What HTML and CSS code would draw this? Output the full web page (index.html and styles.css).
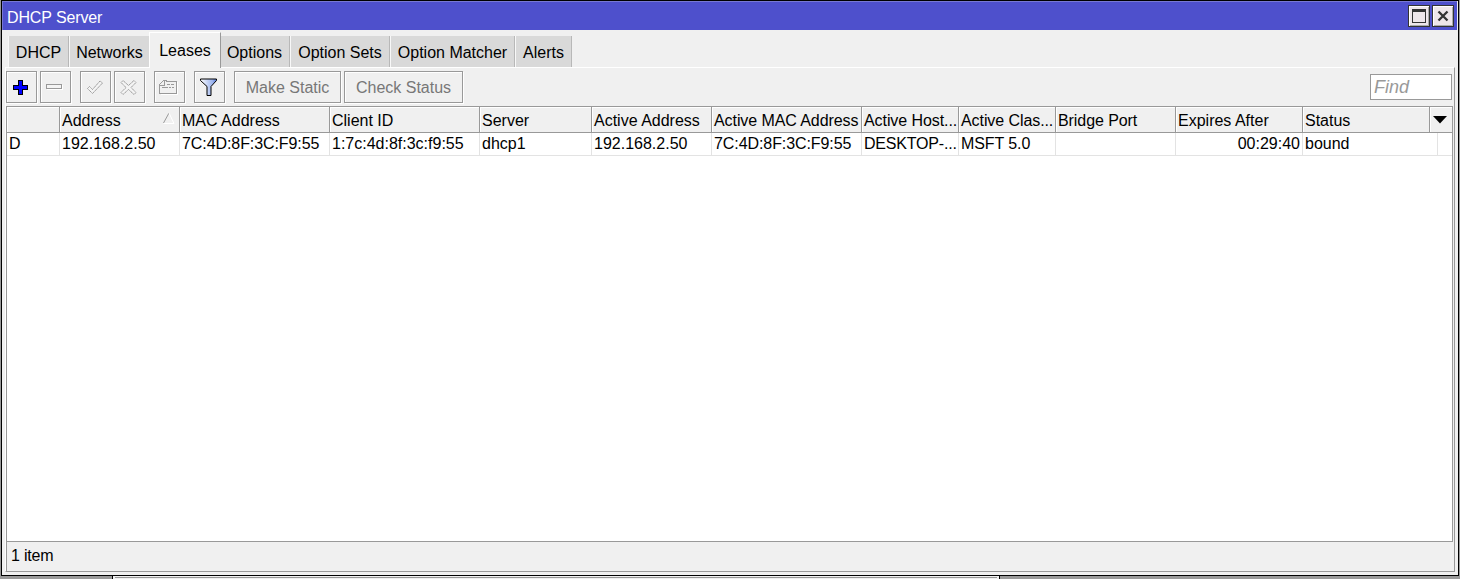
FILE: index.html
```
<!DOCTYPE html>
<html lang="en">
<head>
<meta charset="utf-8">
<title>DHCP Server</title>
<link rel="stylesheet" href="styles.css">
</head>
<body>
<main class="window">
  <header class="titlebar">
    <h1 class="title">DHCP Server</h1>
    <button class="winbtn" aria-label="Maximize"><svg width="14" height="14" shape-rendering="crispEdges"><path d="M0 0h14v14H0zM1 3v10h12V3z" fill="#333" fill-rule="evenodd"/></svg></button>
    <button class="winbtn" aria-label="Close"><svg width="12" height="12"><path d="M1.500 1.500l9 9M10.500 1.500l-9 9" stroke="#333" stroke-width="2.300"/></svg></button>
  </header>
  <nav class="tabs">
    <a class="tab t1">DHCP</a><a class="tab t2">Networks</a><a class="tab active">Leases</a><a class="tab t4">Options</a><a class="tab t5">Option Sets</a><a class="tab t6">Option Matcher</a><a class="tab t7">Alerts</a>
  </nav>
  <section class="panel">
    <div class="toolbar">
      <button class="tool" aria-label="Add"><svg width="15" height="15" shape-rendering="crispEdges"><path d="M5 0h5v5h5v5h-5v5H5v-5H0V5h5z"/><path d="M6 1h3v5h5v3H9v5H6V9H1V6h5z" fill="#00f"/></svg></button>
      <button class="tool gap" aria-label="Remove"><svg width="17" height="6" shape-rendering="crispEdges"><path d="M1.500 1.500h15v4h-15z" fill="none" stroke="#fff"/><path d="M.5.5h15v4H.5z" fill="#f4f4f4" stroke="#999"/></svg></button>
      <button class="tool" aria-label="Enable"><svg width="18" height="15"><path d="M1.500 8.500l2-2 3 3L14 1l2.500 2L6.500 13.500z" fill="#f4f4f4" stroke="#999" stroke-dasharray="1.700 .4"/></svg></button>
      <button class="tool gap" aria-label="Disable"><svg width="17" height="17"><path d="M1 3.500l2-2 5.500 5L14 1.500l2 2-5 5 5 5-2 2-5.500-5-5.500 5-2-2 5-5z" fill="#f4f4f4" stroke="#999" stroke-dasharray="1.700 .4"/></svg></button>
      <button class="tool gap" aria-label="Comment"><svg width="19" height="15" shape-rendering="crispEdges"><path d="M2 14.500h16.500V2" fill="none" stroke="#fff"/><path d="M.5 13.500v-9l4-4h3v1h10v12z" fill="#f0f0f0" stroke="#999"/><path d="M1 5.500h5M5.500 1v5M8 4.500h3M12 4.500h3M3 7.500h6M10 7.500h2M13 7.500h2" fill="none" stroke="#999"/></svg></button>
      <button class="tool gap" aria-label="Filter"><svg width="18" height="19"><defs><linearGradient id="funnel"><stop offset="0" stop-color="#fff"/><stop offset=".75" stop-color="#9cb4ee"/><stop offset="1" stop-color="#5475cf"/></linearGradient></defs><path d="M.5 1h16v1.500l-5.500 6v9H7v-9l-6.500-6z" fill="url(#funnel)" stroke="#000"/></svg></button>
      <button class="command make">Make Static</button>
      <button class="command check">Check Status</button>
      <div class="find">Find</div>
    </div>
    <div class="table">
      <div class="row head">
        <span></span><span class="sorted">Address<svg width="12" height="12"><path d="M.5 11L6 1" stroke="#999"/><path d="M6 1l5 10.500H.5" fill="none" stroke="#fff"/></svg></span><span>MAC Address</span><span>Client ID</span><span>Server</span><span>Active Address</span><span class="tight">Active MAC Address</span><span class="tight">Active Host...</span><span class="tight">Active Clas...</span><span class="tight">Bridge Port</span><span>Expires After</span><span>Status</span><span class="more"><svg width="14" height="8"><path d="M0 0h14L7 7.500z"/></svg></span>
      </div>
      <div class="row data">
        <span>D</span><span>192.168.2.50</span><span class="tight">7C:4D:8F:3C:F9:55</span><span>1:7c:4d:8f:3c:f9:55</span><span>dhcp1</span><span>192.168.2.50</span><span class="tight">7C:4D:8F:3C:F9:55</span><span class="host">DESKTOP-...</span><span class="tight">MSFT 5.0</span><span></span><span class="right">00:29:40</span><span>bound</span><span></span>
      </div>
    </div>
    <footer class="status">1 item</footer>
  </section>
</main>
<div class="behind"></div>
</body>
</html>
```
FILE: styles.css
```
* { box-sizing: border-box; }
body {
  margin: 0;
  height: 579px;
  overflow: hidden;
  background: #999;
  font: 16px/20px "Liberation Sans", Arial, sans-serif;
  color: #000;
}
button { font: inherit; padding: 0; margin: 0; }
svg { display: block; }
.window {
  width: 1458px;
  height: 576px;
  margin-left: 1px;
  border: 1px solid #000;
  background: #f0f0f0;
  display: flex;
  flex-direction: column;
}
.titlebar {
  height: 29px;
  flex: none;
  background: #4e50cc;
  border-top: 1px solid #7778d4;
  border-left: 1px solid #7778d4;
  margin-right: 1px;
  display: flex;
  align-items: center;
  gap: 2px;
  padding: 0 3px 0 4px;
}
.title { flex: 1; margin: 3px 0 0; font-size: 16px; font-weight: 400; letter-spacing: -.12px; color: #fff; }
.winbtn {
  width: 22px;
  height: 22px;
  border: 1px solid #333;
  background: #eee6ea;
  box-shadow: inset 1px 1px #fff, inset -1px -1px #aaa;
  display: grid;
  place-items: center;
}
.tabs { height: 37px; flex: none; display: flex; align-items: flex-end; padding-left: 6px; }
.tab {
  height: 31px;
  background: #d9d9d9;
  border-left: 1px solid #f8f8f8;
  border-right: 1px solid #b8b8b8;
  text-align: center;
  line-height: 33px;
  white-space: nowrap;
}
.t1 { width: 61px; }
.t2 { width: 80px; border-right: 0; }
.active {
  width: 72px;
  height: 36px;
  margin-bottom: -1px;
  background: #f0f0f0;
  border-top: 1px solid #fff;
  border-left-color: #fff;
  border-right-color: #999;
  line-height: 35px;
  position: relative;
}
.t4 { width: 69px; border-left: 0; padding-right: 1px; }
.t5 { width: 100px; }
.t6 { width: 125px; }
.t7 { width: 57px; }
.panel {
  flex: 1;
  margin: 0 3px 3px 3px;
  border: 1px solid #fff;
  border-right-color: #999;
  border-bottom-color: #999;
  display: flex;
  flex-direction: column;
}
.toolbar { height: 38px; flex: none; display: flex; padding: 3px 2px 0 0; }
.tool, .command {
  height: 32px;
  flex: none;
  border: 1px solid #999;
  background: #f0f0f0;
  box-shadow: inset 1px 1px #fff, 1px 1px #fff;
}
.tool { width: 31px; margin-right: 3px; padding-right: 2px; display: grid; place-items: center; }
.gap { margin-right: 9px; }
.command { color: #777; padding-top: 1px; }
.make { width: 107px; margin-right: 3px; }
.check { width: 119px; }
.find {
  margin: 3px 0 0 auto;
  width: 82px;
  height: 26px;
  border: 1px solid #999;
  background: #fff;
  color: #999;
  font-size: 18px;
  font-style: italic;
  line-height: 24px;
  padding-left: 3px;
}
.table {
  height: 436px;
  width: 1447px;
  flex: none;
  border: 1px solid #999;
  background: #fff;
}
.row {
  display: grid;
  grid-template-columns: 53px 120px 150px 150px 112px 120px 150px 97px 97px 120px 127px 127px 22px;
}
.row span { white-space: nowrap; border-right: 1px solid #e3e3e3; padding-left: 2px; }
.row .tight { letter-spacing: -.08px; }
.row .host { letter-spacing: -.2px; }
.head { height: 26px; background: #f0f0f0; border-bottom: 1px solid #999; line-height: 27px; }
.head span { height: 25px; border-right-color: #999; box-shadow: inset 1px 1px #fff; }
.row .sorted { display: flex; justify-content: space-between; padding-right: 4px; }
.sorted svg { margin-top: 5px; }
.row .more { border: 0; padding: 9px 0 0 3px; }
.data { height: 23px; border-bottom: 1px solid #e3e3e3; line-height: 21px; grid-template-columns: 53px 120px 150px 150px 112px 120px 150px 97px 97px 120px 127px 135px 14px; }
.data .right { text-align: right; padding-right: 2px; }
.data span:last-child { border: 0; }
.status { flex: 1; border-left: 1px solid #999; padding: 4px 0 0 4px; letter-spacing: -.2px; }
.behind {
  width: 888px;
  height: 3px;
  margin-left: 112px;
  padding: 1px 2px 0;
  background: #f0f0f0;
  border: solid #000;
  border-width: 0 1px;
}
.behind::before { content: ""; display: block; height: 1px; background: #999; }
```
